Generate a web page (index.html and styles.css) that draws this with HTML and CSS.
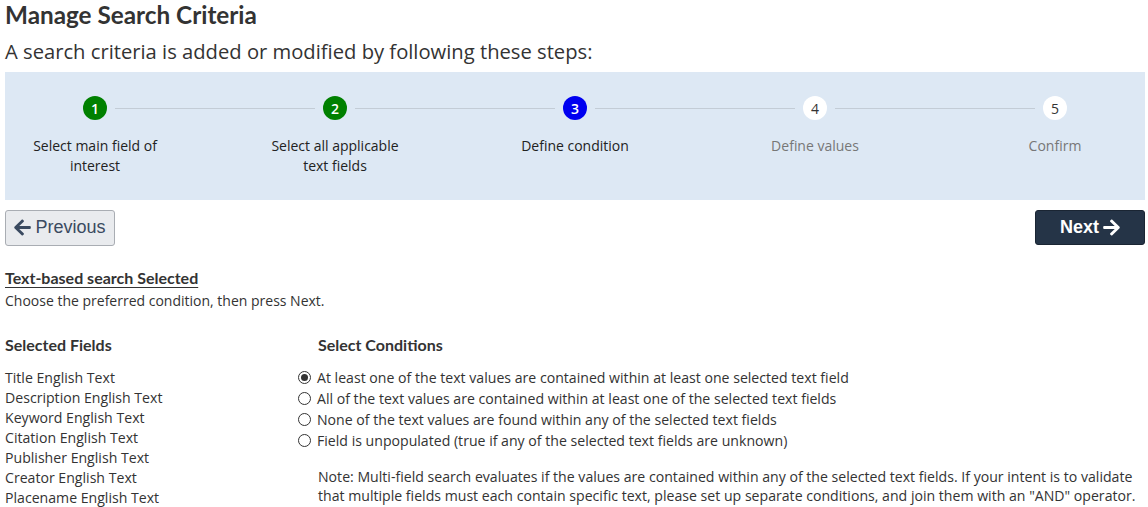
FILE: index.html
```html
<!DOCTYPE html>
<html lang="en">
<head>
<meta charset="utf-8">
<title>Manage Search Criteria</title>
<link rel="stylesheet" href="styles.css">
</head>
<body>
<main class="page">
  <h1 class="title">Manage Search Criteria</h1>
  <p class="subtitle">A search criteria is added or modified by following these steps:</p>

  <section class="stepper">
    <div class="steps">
      <div class="step done first">
        <div class="dot-row"><span class="line"></span><span class="dot">1</span><span class="line"></span></div>
        <div class="label">Select main field of interest</div>
      </div>
      <div class="step done">
        <div class="dot-row"><span class="line"></span><span class="dot">2</span><span class="line"></span></div>
        <div class="label">Select all applicable text fields</div>
      </div>
      <div class="step current">
        <div class="dot-row"><span class="line"></span><span class="dot">3</span><span class="line"></span></div>
        <div class="label">Define condition</div>
      </div>
      <div class="step todo">
        <div class="dot-row"><span class="line"></span><span class="dot">4</span><span class="line"></span></div>
        <div class="label">Define values</div>
      </div>
      <div class="step todo last">
        <div class="dot-row"><span class="line"></span><span class="dot">5</span><span class="line"></span></div>
        <div class="label">Confirm</div>
      </div>
    </div>
  </section>

  <nav class="nav-buttons">
    <button class="btn btn-prev" type="button">
      <svg class="arrow" viewBox="0 0 448 512" aria-hidden="true"><path d="M257.5 445.1l-22.2 22.2c-9.4 9.4-24.6 9.4-33.9 0L7 273c-9.4-9.4-9.4-24.6 0-33.9L201.4 44.7c9.4-9.4 24.6-9.4 33.9 0l22.2 22.2c9.5 9.5 9.3 25-.4 34.3L136.6 216H424c13.3 0 24 10.7 24 24v32c0 13.300-10.7 24-24 24H136.6l120.5 114.8c9.8 9.3 10 24.8.4 34.3z"/></svg>
      Previous
    </button>
    <button class="btn btn-next" type="button">
      Next
      <svg class="arrow" viewBox="0 0 448 512" aria-hidden="true"><path d="M190.5 66.9l22.2-22.2c9.4-9.4 24.6-9.4 33.9 0L441 239c9.4 9.4 9.4 24.6 0 33.9L246.6 467.3c-9.4 9.4-24.6 9.4-33.9 0l-22.2-22.2c-9.5-9.5-9.3-25 .4-34.3L311.4 296H24c-13.3 0-24-10.7-24-24v-32c0-13.3 10.7-24 24-24h287.4L190.9 101.2c-9.8-9.3-10-24.8-.4-34.3z"/></svg>
    </button>
  </nav>

  <section class="intro">
    <h2 class="intro-title">Text-based search Selected</h2>
    <p class="intro-text">Choose the preferred condition, then press Next.</p>
  </section>

  <section class="criteria">
    <div class="fields-col">
      <h3 class="col-title">Selected Fields</h3>
      <ul class="field-list">
        <li>Title English Text</li>
        <li>Description English Text</li>
        <li>Keyword English Text</li>
        <li>Citation English Text</li>
        <li>Publisher English Text</li>
        <li>Creator English Text</li>
        <li>Placename English Text</li>
      </ul>
    </div>
    <div class="conditions-col">
      <h3 class="col-title indent">Select Conditions</h3>
      <div class="radio-list">
        <label class="radio"><input type="radio" name="cond" checked> At least one of the text values are contained within at least one selected text field</label>
        <label class="radio"><input type="radio" name="cond"> All of the text values are contained within at least one of the selected text fields</label>
        <label class="radio"><input type="radio" name="cond"> None of the text values are found within any of the selected text fields</label>
        <label class="radio"><input type="radio" name="cond"> Field is unpopulated (true if any of the selected text fields are unknown)</label>
      </div>
      <p class="note">Note: Multi-field search evaluates if the values are contained within any of the selected text fields. If your intent is to validate that multiple fields must each contain specific text, please set up separate conditions, and join them with an "AND" operator.</p>
    </div>
  </section>
</main>
</body>
</html>
```

FILE: styles.css
```css
* { box-sizing: border-box; }

html, body {
  margin: 0;
  padding: 0;
  background: #fff;
}

body {
  font-family: "Open Sans", "Liberation Sans", sans-serif;
  font-size: 14px;
  color: #333;
}

.page {
  padding: 0 3px 0 5px;
  overflow: hidden;
}

.title {
  font-family: Lato, "Liberation Sans", sans-serif;
  font-weight: 700;
  font-size: 24.3px;
  line-height: 29px;
  margin: 0;
  color: #333;
}

.subtitle {
  font-size: 20.2px;
  line-height: 27px;
  margin: 9px 0 0;
  color: #333;
}

.stepper {
  margin-top: 7px;
  height: 128px;
  background: #dde8f4;
  display: flex;
  justify-content: center;
  overflow: visible;
}

.steps {
  display: flex;
  flex: none;
  width: 1200px;
  padding-top: 24px;
}

.step {
  width: 240px;
  display: flex;
  flex-direction: column;
  align-items: center;
}

.dot-row {
  display: flex;
  align-items: center;
  width: 100%;
  height: 24px;
}

.dot-row .line {
  flex: 1;
  height: 1px;
  background: #c3ccd6;
}

.dot-row .line:first-child { margin-right: 8px; }
.dot-row .line:last-child { margin-left: 8px; }

.first .dot-row .line:first-child,
.last .dot-row .line:last-child { visibility: hidden; }

.dot {
  width: 24px;
  height: 24px;
  border-radius: 50%;
  display: flex;
  align-items: center;
  justify-content: center;
  font-size: 14px;
  font-weight: 600;
  color: #fff;
}

.done .dot { background: #008000; }
.current .dot { background: #0000f0; }
.todo .dot { background: #fff; color: #333; font-weight: 400; }

.label {
  margin-top: 16px;
  max-width: 150px;
  text-align: center;
  line-height: 20px;
  color: #222;
}

.todo .label { color: #777; }

.nav-buttons {
  display: flex;
  justify-content: space-between;
  margin-top: 10px;
}

.btn {
  display: flex;
  align-items: center;
  justify-content: center;
  gap: 4px;
  width: 110px;
  height: 36px;
  border-radius: 3px;
  font-family: "Liberation Sans", Arial, sans-serif;
  font-size: 18px;
  padding: 0 0 2px;
  cursor: pointer;
}

.btn .arrow {
  width: 17px;
  height: 19px;
  fill: currentColor;
}

.btn-prev {
  background: #e9ebee;
  border: 1px solid #a9adb3;
  color: #3a4a60;
}

.btn-next {
  background: #253447;
  border: 1px solid #1a2533;
  color: #fff;
  font-weight: 700;
  height: 35px;
  padding: 0;
}

.intro {
  margin-top: 22px;
}

.intro-title {
  font-family: Lato, "Liberation Sans", sans-serif;
  font-weight: 700;
  font-size: 16px;
  line-height: 20px;
  margin: 0;
  text-decoration: underline;
  text-underline-offset: 3px;
  color: #333;
}

.intro-text {
  margin: 3px 0 0;
  line-height: 20px;
}

.criteria {
  display: grid;
  grid-template-columns: 293px 1fr;
  margin-top: 24px;
  font-size: 14.12px;
}

.col-title {
  font-family: Lato, "Liberation Sans", sans-serif;
  font-weight: 700;
  font-size: 16px;
  line-height: 20px;
  margin: 0 0 13px;
  color: #333;
}

.col-title.indent { padding-left: 20px; }

.field-list {
  list-style: none;
  margin: 0;
  padding: 0;
}

.field-list li {
  line-height: 20px;
}

.radio-list {
  display: flex;
  flex-direction: column;
  margin-top: -1px;
}

.radio {
  display: flex;
  align-items: center;
  gap: 6px;
  line-height: 21px;
}

.radio input {
  appearance: none;
  -webkit-appearance: none;
  margin: 0;
  width: 13px;
  height: 13px;
  border: 1.5px solid #333;
  border-radius: 50%;
  display: grid;
  place-content: center;
  flex: none;
}

.radio input:checked::before {
  content: "";
  width: 7px;
  height: 7px;
  border-radius: 50%;
  background: #333;
}

.note {
  margin: 16px 0 0;
  padding-left: 20px;
  line-height: 19px;
}
```
